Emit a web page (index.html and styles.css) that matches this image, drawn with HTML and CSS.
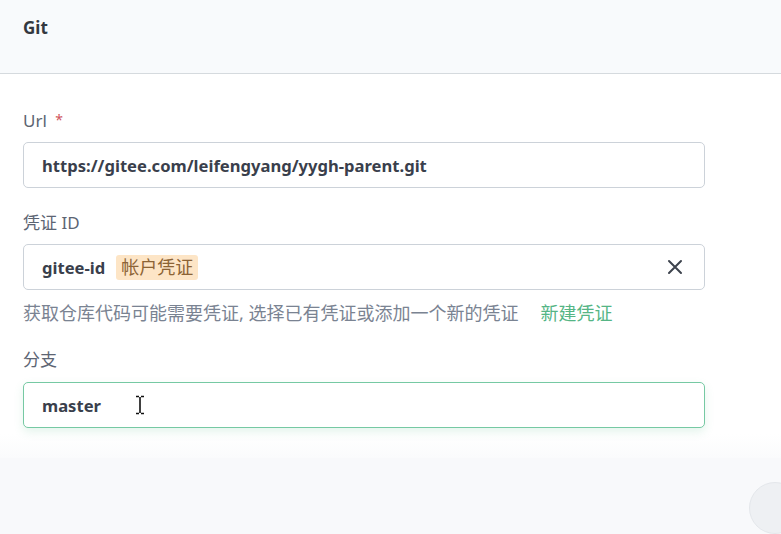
FILE: index.html
```html
<!DOCTYPE html>
<html lang="zh">
<head>
<meta charset="utf-8">
<link rel="stylesheet" href="styles.css">
</head>
<body>
<div class="page">
  <header class="head">Git</header>
  <main class="form">
    <div class="field">
      <div class="label">Url <span class="req">*</span></div>
      <div class="input"><span class="val">https://gitee.com/leifengyang/yygh-parent.git</span></div>
    </div>
    <div class="field f2">
      <div class="label">凭证 ID</div>
      <div class="input">
        <span class="val">gitee-id</span>
        <span class="tag">帐户凭证</span>
        <span class="spacer"></span>
        <svg class="close" width="16" height="16" viewBox="0 0 16 16"><path d="M2 2L14 14M14 2L2 14" stroke="#3d434d" stroke-width="2" stroke-linecap="round"/></svg>
      </div>
      <div class="help">获取仓库代码可能需要凭证, 选择已有凭证或添加一个新的凭证<span class="link">新建凭证</span></div>
    </div>
    <div class="field f3">
      <div class="label">分支</div>
      <div class="input focus">
        <span class="val">master</span>
        <svg class="ibeam" width="10" height="20" viewBox="0 0 10 20"><path d="M1 1.5H4M6 1.5H9M5 2V18M1 18.5H4M6 18.5H9" stroke="#111" stroke-width="1.6" fill="none"/></svg>
      </div>
    </div>
  </main>
  <footer class="foot"><span class="round"></span></footer>
</div>
</body>
</html>
```
FILE: styles.css
```css
* { box-sizing: border-box; }
html, body { margin: 0; padding: 0; }
body {
  width: 781px;
  height: 534px;
  overflow: hidden;
  background: #fff;
  font-family: "Noto Sans", "Noto Sans CJK SC", sans-serif;
  color: #3a3f4c;
}
.page { display: flex; flex-direction: column; height: 534px; }
.head {
  height: 74px;
  flex: none;
  background: #f8fafc;
  border-bottom: 1px solid #d5dade;
  padding: 16px 0 0 23px;
  font-size: 17px;
  font-weight: 700;
  line-height: 24px;
  color: #33383f;
}
.form {
  flex: none;
  height: 384px;
  padding: 36px 76px 0 23px;
  background: linear-gradient(#fff 0, #fff 360px, #fafbfc 384px);
}
.field { display: flex; flex-direction: column; }
.f2 { margin-top: 25px; }
.f3 { margin-top: 27px; }
.label {
  font-size: 17px;
  line-height: 20px;
  color: #5d6573;
  margin-bottom: 11px;
}
.f3 .label { margin-bottom: 12px; }
.req { color: #d0555c; font-size: 14px; margin-left: 4px; vertical-align: 2px; }
.input {
  height: 46px;
  border: 1px solid #ccd2d9;
  border-radius: 5px;
  display: flex;
  align-items: center;
  padding: 0 21px 0 18px;
  background: #fff;
}
.input.focus {
  border-color: #76c9a3;
  box-shadow: 0 4px 10px rgba(85, 188, 138, 0.16);
}
.val {
  font-family: "Noto Sans", sans-serif;
  font-weight: 700;
  font-size: 16.6px;
  color: #3a3f4c;
}
.tag {
  margin-left: 11px;
  background: #fde5c6;
  color: #8c6335;
  font-size: 18px;
  line-height: 25px;
  padding: 0 5px;
  border-radius: 3px;
}
.spacer { flex: 1; }
.close { display: block; }
.ibeam { margin-left: 34px; }
.help {
  margin-top: 13px;
  font-size: 18px;
  line-height: 20px;
  color: #7a8392;
}
.link { color: #55b585; margin-left: 22px; }
.foot {
  flex: 1;
  background: #f8f9fb;
  position: relative;
}
.round {
  position: absolute;
  left: 749px;
  top: 24px;
  width: 52px;
  height: 52px;
  border-radius: 50%;
  background: #eef0f3;
  border: 1px solid #e4e7eb;
}
```
